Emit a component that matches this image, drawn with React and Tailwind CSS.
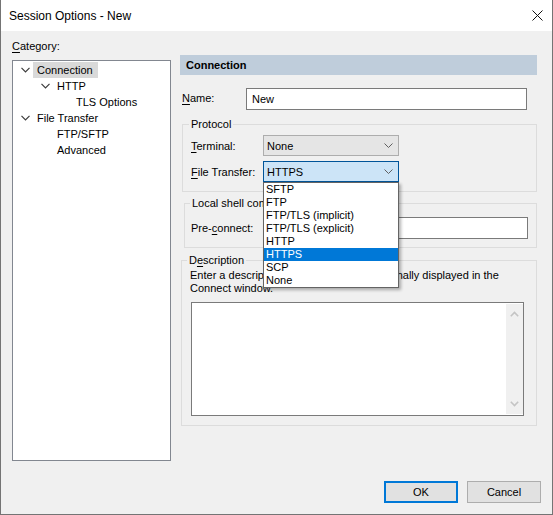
import React from "react";

const font = "font-['Liberation_Sans',Arial,sans-serif]";

function TreeChevron() {
  return (
    <svg width="9" height="6" viewBox="0 0 9 6" className="shrink-0">
      <path d="M0.5 0.8 L4.5 4.8 L8.5 0.8" fill="none" stroke="#3c3c3c" strokeWidth="1.2" />
    </svg>
  );
}

function ComboChevron() {
  return (
    <svg width="9" height="5" viewBox="0 0 9 5">
      <path d="M0.5 0.5 L4.5 4.5 L8.5 0.5" fill="none" stroke="#5f5f5f" strokeWidth="1" />
    </svg>
  );
}

function ScrollArrow({ up }) {
  return (
    <svg width="9" height="6" viewBox="0 0 9 6">
      <path
        d={up ? "M0.8 5.2 L4.5 1.5 L8.2 5.2" : "M0.8 0.8 L4.5 4.5 L8.2 0.8"}
        fill="none"
        stroke="#c4c4c4"
        strokeWidth="1.6"
      />
    </svg>
  );
}

const tree = [
  { label: "Connection", pad: "pl-[8px]", open: true, selected: true },
  { label: "HTTP", pad: "pl-[28px]", open: true },
  { label: "TLS Options", pad: "pl-[47px]" },
  { label: "File Transfer", pad: "pl-[8px]", open: true },
  { label: "FTP/SFTP", pad: "pl-[28px]" },
  { label: "Advanced", pad: "pl-[28px]" },
];

const transfers = ["SFTP", "FTP", "FTP/TLS (implicit)", "FTP/TLS (explicit)", "HTTP", "HTTPS", "SCP", "None"];

function Mn({ children }) {
  return <span className="underline decoration-1 underline-offset-[2px]">{children}</span>;
}

export default function App() {
  return (
    <div
      className={`flex h-[515px] w-[553px] flex-col border-x border-b border-[#747474] bg-[#f0f0f0] text-[11px] leading-[16px] text-black ${font}`}
    >
      {/* title bar */}
      <div className="flex h-[31px] shrink-0 items-center justify-between bg-white pl-[8px] pr-[9px]">
        <span className="text-[12px]">Session Options - New</span>
        <svg width="11" height="11" viewBox="0 0 11 11">
          <path d="M0.5 0.5 L10.5 10.5 M10.5 0.5 L0.5 10.5" stroke="#111" strokeWidth="1" />
        </svg>
      </div>

      <div className="flex items-start pl-[11px]">
        {/* category tree */}
        <div className="pt-[7px]">
          <div>
            <Mn>C</Mn>ategory:
          </div>
          <div className="mt-[6px] h-[401px] w-[159px] border border-[#828790] bg-white pt-[1px]">
            {tree.map((item) => (
              <div key={item.label} className={`flex h-[16px] items-center ${item.pad}`}>
                <div className="w-[12px]">{item.open && <TreeChevron />}</div>
                <div className={`pl-[4px] pr-[5px] ${item.selected ? "bg-[#d9d9d9]" : ""}`}>{item.label}</div>
              </div>
            ))}
          </div>
        </div>

        {/* right panel */}
        <div className="ml-[9px] w-[357px] pt-[24px]">
          <div className="flex h-[20px] items-center bg-[#bfcddb] pl-[6px] font-bold">Connection</div>

          <div className="mt-[13px] flex items-center pl-[2px]">
            <div className="w-[64px] -translate-y-[1px]">
              <Mn>N</Mn>ame:
            </div>
            <div className="flex h-[22px] w-[281px] items-center border border-[#7a7a7a] bg-white pl-[5px]">New</div>
          </div>

          <fieldset className="ml-[2px] mt-[6px] border border-[#dcdcdc] pb-[9px] pl-[6px]">
            <legend className="px-[2px]">Protocol</legend>
            <div className="flex flex-col gap-[5px] pl-[2px] pt-[3px]">
              <div className="flex items-center">
                <div className="w-[72px]">
                  <Mn>T</Mn>erminal:
                </div>
                <div className="flex h-[21px] w-[136px] items-center justify-between border border-[#adadad] bg-[#e5e5e5] pl-[3px] pr-[5px]">
                  <span>None</span>
                  <ComboChevron />
                </div>
              </div>
              <div className="flex items-center">
                <div className="w-[72px]">
                  <Mn>F</Mn>ile Transfer:
                </div>
                <div className="relative">
                  <div className="flex h-[21px] w-[136px] items-center justify-between border border-[#005499] bg-[#cce4f7] pl-[3px] pr-[5px]">
                    <span>HTTPS</span>
                    <ComboChevron />
                  </div>
                  <ul className="absolute left-0 top-full z-10 w-[136px] border border-[#646464] bg-white shadow-[2px_2px_3px_rgba(0,0,0,0.3)]">
                    {transfers.map((t) => (
                      <li
                        key={t}
                        className={`h-[13px] whitespace-nowrap pl-[2px] leading-[13px] ${
                          t === "HTTPS" ? "bg-[#0078d7] text-white" : ""
                        }`}
                      >
                        {t}
                      </li>
                    ))}
                  </ul>
                </div>
              </div>
            </div>
          </fieldset>

          <fieldset className="ml-[4px] mt-[3px] border border-[#dcdcdc] pb-[8px] pl-[5px]">
            <legend className="px-[2px]">Local shell commands</legend>
            <div className="flex items-center pl-[1px] pt-[6px]">
              <div className="w-[72px]">
                Pre-<Mn>c</Mn>onnect:
              </div>
              <div className="h-[22px] w-[265px] border border-[#7a7a7a] bg-white" />
            </div>
          </fieldset>

          <fieldset className="ml-[1px] mt-[4px] border border-[#dcdcdc] pb-[9px] pl-[5px]">
            <legend className="px-[2px]">
              D<Mn>e</Mn>scription
            </legend>
            <div className="pl-[3px] pt-[1px] leading-[13px]">
              <div className="whitespace-nowrap">Enter a description which will also be optionally displayed in the</div>
              <div>Connect window.</div>
            </div>
            <div className="ml-[4px] mt-[7px] flex h-[114px] w-[333px] justify-end border border-[#7a7a7a] bg-white">
              <div className="my-[1px] flex w-[17px] flex-col items-center justify-between bg-[#f0f0f0] py-[7px]">
                <ScrollArrow up />
                <ScrollArrow />
              </div>
            </div>
          </fieldset>
        </div>
      </div>

      {/* buttons */}
      <div className="mt-auto flex justify-end gap-[9px] pb-[11px] pr-[11px]">
        <button className="flex h-[22px] w-[74px] items-center justify-center border-2 border-[#0078d7] bg-[#e1e1e1]">
          OK
        </button>
        <button className="flex h-[22px] w-[74px] items-center justify-center border border-[#adadad] bg-[#e1e1e1]">
          Cancel
        </button>
      </div>
    </div>
  );
}
